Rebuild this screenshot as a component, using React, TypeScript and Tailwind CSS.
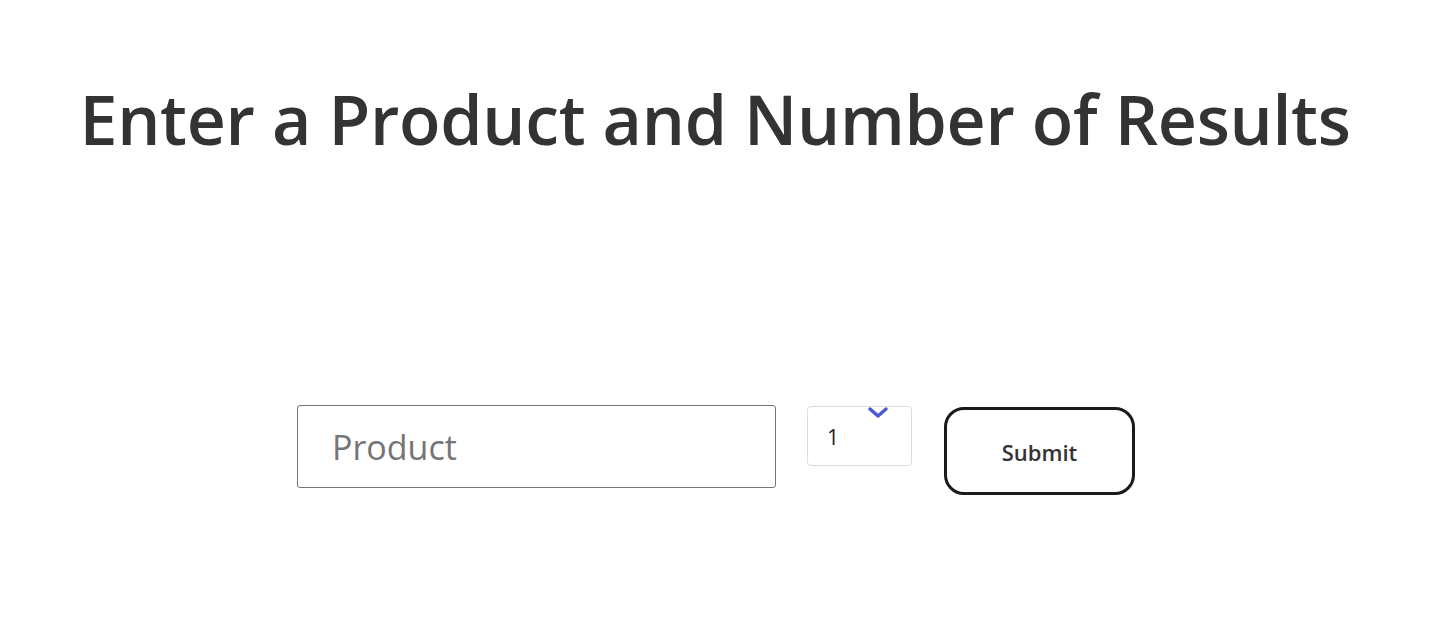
export default function App() {
  return (
    <div className="w-full h-[618px] bg-white font-['Open_Sans','Noto_Sans',sans-serif] text-[#333333]">
      <h1 className="pt-[74px] text-center text-[68px] leading-[90px] font-semibold tracking-[-0.3px]">
        Enter a Product and Number of Results
      </h1>
      <form className="mt-[241px] pl-[2px] flex items-start justify-center">
        <input
          type="text"
          placeholder="Product"
          className="w-[479px] h-[83px] rounded-[3px] border border-[#767676] pl-[34px] text-[34px] text-[#333] placeholder:text-[#757575] outline-none"
        />
        <div className="relative ml-[31px] mt-[1px] w-[105px] h-[60px] rounded-[4px] border border-[#dddddd]">
          <span className="absolute left-[19px] top-[18px] text-[21px] leading-[24px] text-[#222]">1</span>
          <svg
            className="absolute left-[59px] top-[-1px]"
            width="22"
            height="14"
            viewBox="0 0 22 14"
            fill="none"
          >
            <path d="M3 3 L11 10 L19 3" stroke="#4a5bd4" strokeWidth="3.5" strokeLinecap="round" strokeLinejoin="round" />
          </svg>
        </div>
        <button
          type="button"
          className="ml-[32px] mt-[2px] w-[191px] h-[88px] rounded-[20px] border-[3px] border-[#1a1a1a] bg-white pt-[3px] text-[22px] font-semibold text-[#333]"
        >
          Submit
        </button>
      </form>
    </div>
  );
}
